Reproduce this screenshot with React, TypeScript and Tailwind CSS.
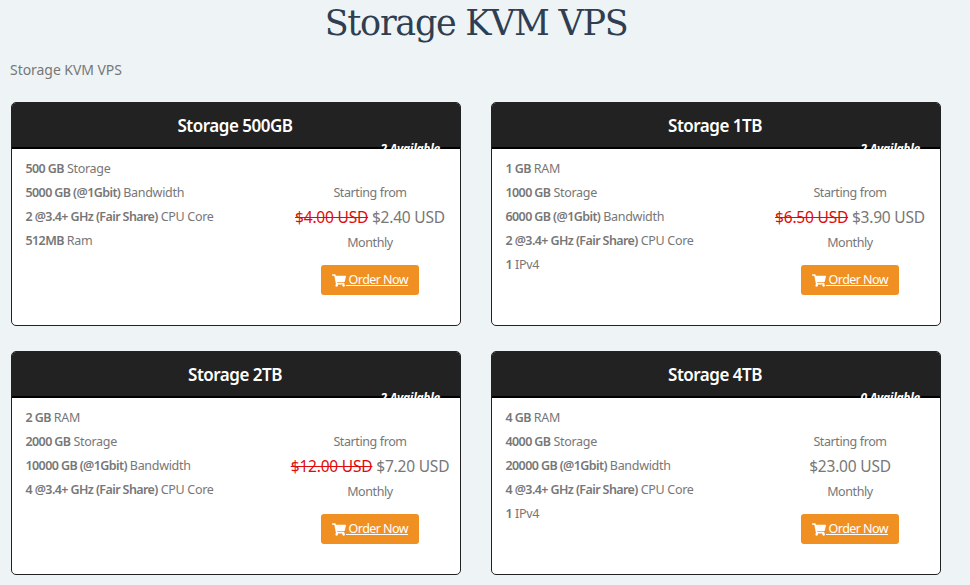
import { FaShoppingCart } from "react-icons/fa"

interface Feature {
  value: string
  label: string
}

interface Plan {
  name: string
  available: number
  features: Feature[]
  oldPrice?: string
  price: string
}

const plans: Plan[] = [
  {
    name: "Storage 500GB",
    available: 2,
    features: [
      { value: "500 GB", label: "Storage" },
      { value: "5000 GB (@1Gbit)", label: "Bandwidth" },
      { value: "2 @3.4+ GHz (Fair Share)", label: "CPU Core" },
      { value: "512MB", label: "Ram" },
    ],
    oldPrice: "$4.00 USD",
    price: "$2.40 USD",
  },
  {
    name: "Storage 1TB",
    available: 2,
    features: [
      { value: "1 GB", label: "RAM" },
      { value: "1000 GB", label: "Storage" },
      { value: "6000 GB (@1Gbit)", label: "Bandwidth" },
      { value: "2 @3.4+ GHz (Fair Share)", label: "CPU Core" },
      { value: "1", label: "IPv4" },
    ],
    oldPrice: "$6.50 USD",
    price: "$3.90 USD",
  },
  {
    name: "Storage 2TB",
    available: 2,
    features: [
      { value: "2 GB", label: "RAM" },
      { value: "2000 GB", label: "Storage" },
      { value: "10000 GB (@1Gbit)", label: "Bandwidth" },
      { value: "4 @3.4+ GHz (Fair Share)", label: "CPU Core" },
    ],
    oldPrice: "$12.00 USD",
    price: "$7.20 USD",
  },
  {
    name: "Storage 4TB",
    available: 0,
    features: [
      { value: "4 GB", label: "RAM" },
      { value: "4000 GB", label: "Storage" },
      { value: "20000 GB (@1Gbit)", label: "Bandwidth" },
      { value: "4 @3.4+ GHz (Fair Share)", label: "CPU Core" },
      { value: "1", label: "IPv4" },
    ],
    price: "$23.00 USD",
  },
]

function PlanCard({ plan }: { plan: Plan }) {
  return (
    <div className="flex h-56 flex-col overflow-hidden rounded-[5px] border border-[#222] bg-white">
      <header className="h-[46px] border-b-2 border-black bg-[#222] pr-0.5 text-center text-white">
        <h2 className="text-[17px] leading-[45px] font-semibold tracking-[-0.5px]">{plan.name}</h2>
      </header>
      {/* Stock count, white on white below the bottom edge of the header */}
      <div className="relative">
        <div className="absolute -top-2 right-5 text-[12px] leading-[16px] font-bold tracking-[-0.25px] whitespace-nowrap text-white italic">
          {plan.available} Available
        </div>
      </div>
      <div className="flex flex-1 justify-between pt-2 pl-[13.5px] text-[12.5px] leading-6 text-[#777]">
        <ul className="whitespace-nowrap">
          {plan.features.map((feature) => (
            <li key={feature.value} className="tracking-[-0.3px]">
              <span className="font-semibold tracking-[-0.6px]">{feature.value}</span> {feature.label}
            </li>
          ))}
        </ul>
        <div className="flex w-[180px] flex-col items-center pt-6">
          <span className="tracking-[-0.4px]">Starting from</span>
          <div className="h-[26px] text-[15.5px] leading-6 tracking-[-0.2px] whitespace-nowrap">
            {plan.oldPrice && <span className="text-[#e00b0b] line-through">{plan.oldPrice}</span>} {plan.price}
          </div>
          <span className="tracking-[-0.4px]">Monthly</span>
          <a
            href="#"
            className="mt-2.5 flex h-[30px] w-[98px] items-center justify-center rounded-[3px] bg-[#f09022] text-white"
          >
            <FaShoppingCart className="h-[13px] w-[14px]" />
            <span className="tracking-[-0.55px] whitespace-pre underline"> Order Now</span>
          </a>
        </div>
      </div>
    </div>
  )
}

export default function App() {
  return (
    <main className="h-[585px] overflow-hidden bg-[#eef4f6] pr-[29px] pl-[11px] font-['Noto_Sans',sans-serif]">
      <h1 className="h-[58px] text-center font-['DejaVu_Serif',serif] text-[35px] leading-[46px] tracking-[-1.3px] text-[#2f3e50]">
        Storage KVM VPS
      </h1>
      <p className="-ml-px h-11 text-[14px] leading-6 tracking-[-0.05px] text-[#777]">Storage KVM VPS</p>
      <div className="grid grid-cols-2 gap-x-[30px] gap-y-[25px]">
        {plans.map((plan) => (
          <PlanCard key={plan.name} plan={plan} />
        ))}
      </div>
    </main>
  )
}
